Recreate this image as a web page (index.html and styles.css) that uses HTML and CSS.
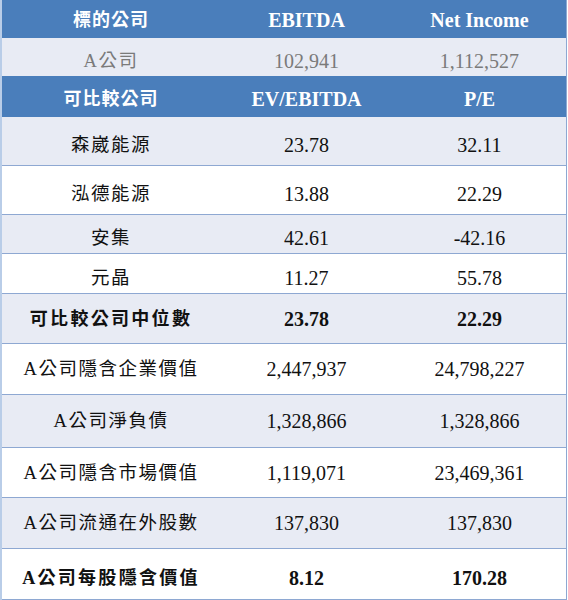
FILE: index.html
```html
<!DOCTYPE html>
<html lang="zh-Hant">
<head>
<meta charset="utf-8">
<title>可比較公司</title>
<link rel="stylesheet" href="styles.css">
</head>
<body>
<div class="table">
  <div class="row head h1"><div class="c zh-b">標的公司</div><div class="c">EBITDA</div><div class="c">Net Income</div></div>
  <div class="row band target"><div class="c zh">A公司</div><div class="c">102,941</div><div class="c">1,112,527</div></div>
  <div class="row head h2"><div class="c zh-b">可比較公司</div><div class="c">EV/EBITDA</div><div class="c">P/E</div></div>
  <div class="row band line r48 low"><div class="c zh">森崴能源</div><div class="c">23.78</div><div class="c">32.11</div></div>
  <div class="row line r48 low"><div class="c zh">泓德能源</div><div class="c">13.88</div><div class="c">22.29</div></div>
  <div class="row band line r38 low"><div class="c zh">安集</div><div class="c">42.61</div><div class="c">-42.16</div></div>
  <div class="row line r39 low"><div class="c zh">元晶</div><div class="c">11.27</div><div class="c">55.78</div></div>
  <div class="row band line r49 bold"><div class="c zh-b median">可比較公司中位數</div><div class="c">23.78</div><div class="c">22.29</div></div>
  <div class="row line r50"><div class="c zh">A公司隱含企業價值</div><div class="c">2,447,937</div><div class="c">24,798,227</div></div>
  <div class="row band line r52"><div class="c zh">A公司淨負債</div><div class="c">1,328,866</div><div class="c">1,328,866</div></div>
  <div class="row line r49"><div class="c zh">A公司隱含市場價值</div><div class="c">1,119,071</div><div class="c">23,469,361</div></div>
  <div class="row band line r50"><div class="c zh">A公司流通在外股數</div><div class="c">137,830</div><div class="c">137,830</div></div>
  <div class="row line r50 bold low"><div class="c zh-b pershare">A公司每股隱含價值</div><div class="c">8.12</div><div class="c">170.28</div></div>
</div>
</body>
</html>
```

FILE: styles.css
```css
* { box-sizing: border-box; }
html, body { margin: 0; padding: 0; background: #ffffff; }
body {
  font-family: "Liberation Serif", "Noto Sans CJK TC", serif;
  font-size: 20px;
  color: #111111;
}
.table {
  width: 567px;
  border-left: 2px solid #b9cde8;
  border-right: 1px solid #8ea8d2;
}
.row {
  display: grid;
  grid-template-columns: 218px 173px 173px;
  align-items: center;
  line-height: 24px;
}
.c { text-align: center; white-space: nowrap; }
.head {
  background: #4a7ebb;
  color: #ffffff;
  font-weight: bold;
}
.h1 { height: 38px; padding-top: 2px; }
.h2 { height: 41px; padding-top: 5px; }
.band { background: #e8ebf4; }
.target { height: 38px; color: #7a7a7a; padding-top: 8px; }
.line { border-bottom: 1px solid #8ea8d2; }
.r38 { height: 39px; }
.r39 { height: 40px; }
.r48 { height: 49px; }
.r49 { height: 50px; }
.r50 { height: 51px; }
.r52 { height: 53px; }
.low { padding-top: 8px; }
.bold { font-weight: bold; }
.zh { font-size: 18.5px; letter-spacing: 1.5px; }
.zh-b { font-size: 18px; letter-spacing: 1px; font-weight: bold; }
.zh-b.median { letter-spacing: 2.3px; }
.zh-b.pershare { letter-spacing: 2.3px; }
```
